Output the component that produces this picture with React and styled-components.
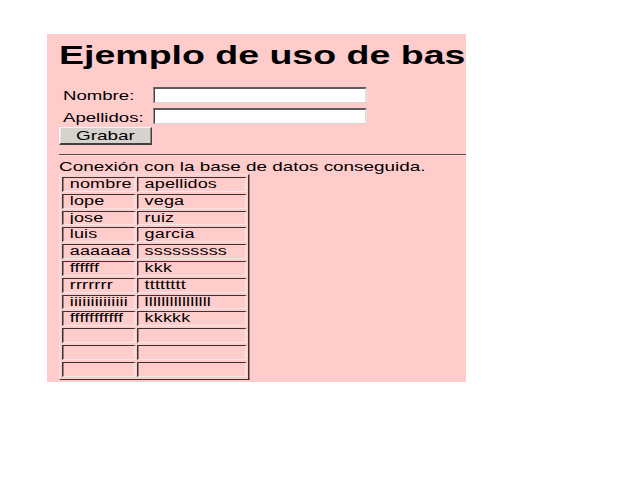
import React from "react";
import styled, { createGlobalStyle } from "styled-components";

const Global = createGlobalStyle`
  html, body { margin: 0; padding: 0; background: #ffffff; }
  body { font-family: "Liberation Sans", Arial, sans-serif; }
`;

const Viewport = styled.div`
  width: 419px;
  height: 348px;
  margin: 34px 0 0 47px;
  background: #ffcccc;
  overflow: hidden;
`;

/* The captured page is stretched horizontally; this reproduces the stretch. */
const Stretch = styled.div`
  width: 279.3px;
  padding: 0 8px;
  box-sizing: border-box;
  transform: scaleX(1.5);
  transform-origin: 0 0;
  color: #000;
  font-family: "Liberation Sans", Arial, sans-serif;
`;

const Heading = styled.h1`
  margin: 6.5px 0 0 0;
  font-size: 25px;
  line-height: 28px;
  font-weight: bold;
  white-space: nowrap;
`;

const Form = styled.form`
  margin: 18.5px 0 0 0;
  display: flex;
  flex-direction: column;
  align-items: flex-start;
`;

const FieldRow = styled.div`
  display: flex;
  align-items: flex-start;
  margin-left: 2.7px;
  margin-bottom: ${(p) => p.$gap}px;
`;

const Label = styled.label`
  width: 60px;
  font-size: 12.4px;
  line-height: 16px;
  padding-top: 1.3px;
  white-space: nowrap;
`;

const TextInput = styled.input`
  width: 142.7px;
  height: 16px;
  box-sizing: border-box;
  margin: 0;
  padding: 0 2px;
  background: #ffffff;
  border-style: solid;
  border-width: 2px 1px 1px 1px;
  border-color: #5c5c5c #e0dcd8 #d8d4d0 #404040;
  outline: none;
`;

const Button = styled.button`
  width: 62px;
  height: 18px;
  margin: 0;
  box-sizing: border-box;
  background: #d6d3ce;
  border-style: solid;
  border-width: 1px 1px 2px 1px;
  border-color: #f4f2ee #404040 #404040 #ffffff;
  font-family: "Liberation Sans", Arial, sans-serif;
  font-size: 12.6px;
  line-height: 14px;
  color: #000;
  padding: 1px 0 0 0;
`;

const Rule = styled.hr`
  margin: 9px -20px 0 0;
  height: 0;
  border: 0;
  border-top: 1px solid #5a4646;
  border-bottom: 1px solid #f6e4e4;
`;

const Status = styled.p`
  margin: 4.5px 0 0 0;
  font-size: 12.6px;
  line-height: 14px;
  white-space: nowrap;
`;

const Grid = styled.table`
  table-layout: fixed;
  border-collapse: separate;
  border-spacing: 1.5px 2px;
  border-style: solid;
  border-width: 1px;
  border-color: #f2dede #3e3030 #3e3030 #f2dede;
`;

const Cell = styled.td`
  box-sizing: border-box;
  width: ${(p) => p.$w}px;
  height: 14.8px;
  padding: 0 0 0 4.2px;
  border-style: solid;
  border-width: 1px;
  border-color: #3e3030 #f4e6e6 #f4e6e6 #3e3030;
  font-size: 12px;
  line-height: 12.8px;
  letter-spacing: 0.1px;
  white-space: nowrap;
  overflow: hidden;
  vertical-align: top;
`;

const rows = [
  ["nombre", "apellidos"],
  ["lope", "vega"],
  ["jose", "ruiz"],
  ["luis", "garcia"],
  ["aaaaaa", "sssssssss"],
  ["ffffff", "kkk"],
  ["rrrrrrr", "tttttttt"],
  ["iiiiiiiiiiiiii", "llllllllllllllll"],
  ["fffffffffff", "kkkkk"],
  ["", ""],
  ["", ""],
  ["", ""],
];

export default function App() {
  return (
    <>
      <Global />
      <Viewport>
        <Stretch>
          <Heading>Ejemplo de uso de base de datos</Heading>
          <Form onSubmit={(e) => e.preventDefault()}>
            <FieldRow $gap={4}>
              <Label htmlFor="nombre">Nombre:</Label>
              <TextInput id="nombre" type="text" />
            </FieldRow>
            <FieldRow $gap={1}>
              <Label htmlFor="apellidos">Apellidos:</Label>
              <TextInput id="apellidos" type="text" />
            </FieldRow>
            <Button type="submit">Grabar</Button>
          </Form>
          <Rule />
          <Status>Conexión con la base de datos conseguida.</Status>
          <Grid>
            <tbody>
              {rows.map((r, i) => (
                <tr key={i}>
                  <Cell $w={48.9}>{r[0]}</Cell>
                  <Cell $w={72.7}>{r[1]}</Cell>
                </tr>
              ))}
            </tbody>
          </Grid>
        </Stretch>
      </Viewport>
    </>
  );
}
